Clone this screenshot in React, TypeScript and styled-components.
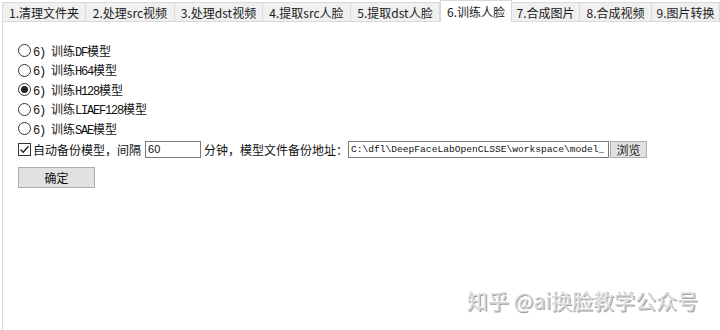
import React from "react";
import styled, { createGlobalStyle } from "styled-components";

const Global = createGlobalStyle`
  html, body { margin: 0; padding: 0; background: #ffffff; }
  body { font-family: "Noto Sans CJK SC", "Noto Sans", sans-serif; }
`;

const Page = styled.div`
  width: 720px;
  height: 330px;
  display: flex;
  flex-direction: column;
  background: #ffffff;
  overflow: hidden;
  position: relative;
`;

const TabBar = styled.div`
  display: flex;
  align-items: flex-end;
  height: 22px;
  padding-left: 2px;
  box-sizing: border-box;
`;

const Tab = styled.div<{ $w: number; $active?: boolean }>`
  width: ${(p) => p.$w}px;
  height: ${(p) => (p.$active ? 22 : 20)}px;
  box-sizing: border-box;
  border: 1px solid #d9d9d9;
  border-left: ${(p) => (p.$active ? "1px solid #d9d9d9" : "none")};
  border-bottom: ${(p) => (p.$active ? "none" : "1px solid #d9d9d9")};
  background: ${(p) => (p.$active ? "#ffffff" : "#f0f0f0")};
  display: flex;
  align-items: center;
  justify-content: center;
  font-size: 12px;
  color: #1a1a1a;
  white-space: nowrap;
  &:first-child { border-left: 1px solid #d9d9d9; }
`;

const Panel = styled.div`
  flex: 1;
  margin-left: 2px;
  border-left: 1px solid #d9d9d9;
  padding: 19px 0 0 15px;
  display: flex;
  flex-direction: column;
`;

const RadioRow = styled.label`
  display: flex;
  align-items: center;
  height: 19.5px;
  font-size: 12px;
  color: #111;
`;

const RadioCircle = styled.span<{ $on?: boolean }>`
  width: 13px;
  height: 13px;
  flex: none;
  box-sizing: border-box;
  border-radius: 50%;
  border: 1px solid #333;
  background: #fff;
  display: flex;
  align-items: center;
  justify-content: center;
  margin-right: 2px;
  &::after {
    content: "";
    display: ${(p) => (p.$on ? "block" : "none")};
    width: 7px;
    height: 7px;
    border-radius: 50%;
    background: #222;
  }
`;

const LabelText = styled.span`
  white-space: pre;
`;

const Mono = styled.span`
  font-family: "Liberation Mono", monospace;
  font-size: 12px;
  letter-spacing: -1.2px;
`;

const SettingRow = styled.div`
  display: flex;
  align-items: center;
  height: 19px;
  margin-top: 1px;
  font-size: 12px;
  color: #111;
  white-space: nowrap;
`;

const CheckBox = styled.span`
  width: 13px;
  height: 13px;
  flex: none;
  box-sizing: border-box;
  border: 1px solid #333;
  background: #fff;
  margin-right: 2px;
  display: flex;
  align-items: center;
  justify-content: center;
`;

const TextBox = styled.div<{ $w: number; $mono?: boolean }>`
  width: ${(p) => p.$w}px;
  height: 17px;
  flex: none;
  box-sizing: border-box;
  border: 1px solid #7a7a7a;
  background: #fff;
  display: flex;
  align-items: center;
  padding-left: 2px;
  overflow: hidden;
  white-space: nowrap;
  font-family: ${(p) => (p.$mono ? `"Liberation Mono", monospace` : `"Liberation Sans", sans-serif`)};
  font-size: ${(p) => (p.$mono ? "9.6px" : "11px")};
  color: #111;
`;

const Gap = styled.span<{ $w: number }>`
  display: inline-block;
  flex: none;
  width: ${(p) => p.$w}px;
`;

const SmallButton = styled.div`
  width: 37px;
  height: 17px;
  flex: none;
  box-sizing: border-box;
  margin-left: 1px;
  border: 1px solid #adadad;
  background: #e1e1e1;
  display: flex;
  align-items: center;
  justify-content: center;
  font-size: 12px;
  color: #222;
`;

const OkButton = styled.div`
  width: 77px;
  height: 21px;
  box-sizing: border-box;
  margin-top: 8px;
  border: 1px solid #adadad;
  background: #e1e1e1;
  display: flex;
  align-items: center;
  justify-content: center;
  font-size: 12px;
  color: #111;
`;

const Watermark = styled.div`
  position: absolute;
  left: 467px;
  top: 285px;
  font-size: 21px;
  color: #d6d6d6;
  text-shadow: -1px -1px 0 #ffffff, 1px 1px 0 #a0a0a0;
  white-space: nowrap;
`;

const tabs: [string, number][] = [
  ["1.清理文件夹", 84],
  ["2.处理src视频", 89],
  ["3.处理dst视频", 88],
  ["4.提取src人脸", 88],
  ["5.提取dst人脸", 89],
  ["6.训练人脸", 72],
  ["7.合成图片", 68],
  ["8.合成视频", 72],
  ["9.图片转换", 68],
];

const radios = ["DF", "H64", "H128", "LIAEF128", "SAE"];

export default function App() {
  return (
    <Page>
      <Global />
      <TabBar>
        {tabs.map(([t, w], i) => (
          <Tab key={t} $w={w} $active={i === 5}>
            {t}
          </Tab>
        ))}
      </TabBar>
      <Panel>
        {radios.map((r) => (
          <RadioRow key={r}>
            <RadioCircle $on={r === "H128"} />
            <LabelText>
              <Mono>6) </Mono>训练<Mono>{r}</Mono>模型
            </LabelText>
          </RadioRow>
        ))}
        <SettingRow>
          <CheckBox>
            <svg width="11" height="11" viewBox="0 0 11 11">
              <path d="M1.5 5.5 L4.2 8.3 L9.5 2.2" fill="none" stroke="#222" strokeWidth="1.3" />
            </svg>
          </CheckBox>
          自动备份模型，间隔
          <Gap $w={4} />
          <TextBox $w={56}>60</TextBox>
          <Gap $w={3} />
          分钟，模型文件备份地址：
          <TextBox $w={261} $mono>
            C:\dfl\DeepFaceLabOpenCLSSE\workspace\model_
          </TextBox>
          <SmallButton>浏览</SmallButton>
        </SettingRow>
        <OkButton>确定</OkButton>
      </Panel>
      <Watermark>知乎 @ai换脸教学公众号</Watermark>
    </Page>
  );
}
